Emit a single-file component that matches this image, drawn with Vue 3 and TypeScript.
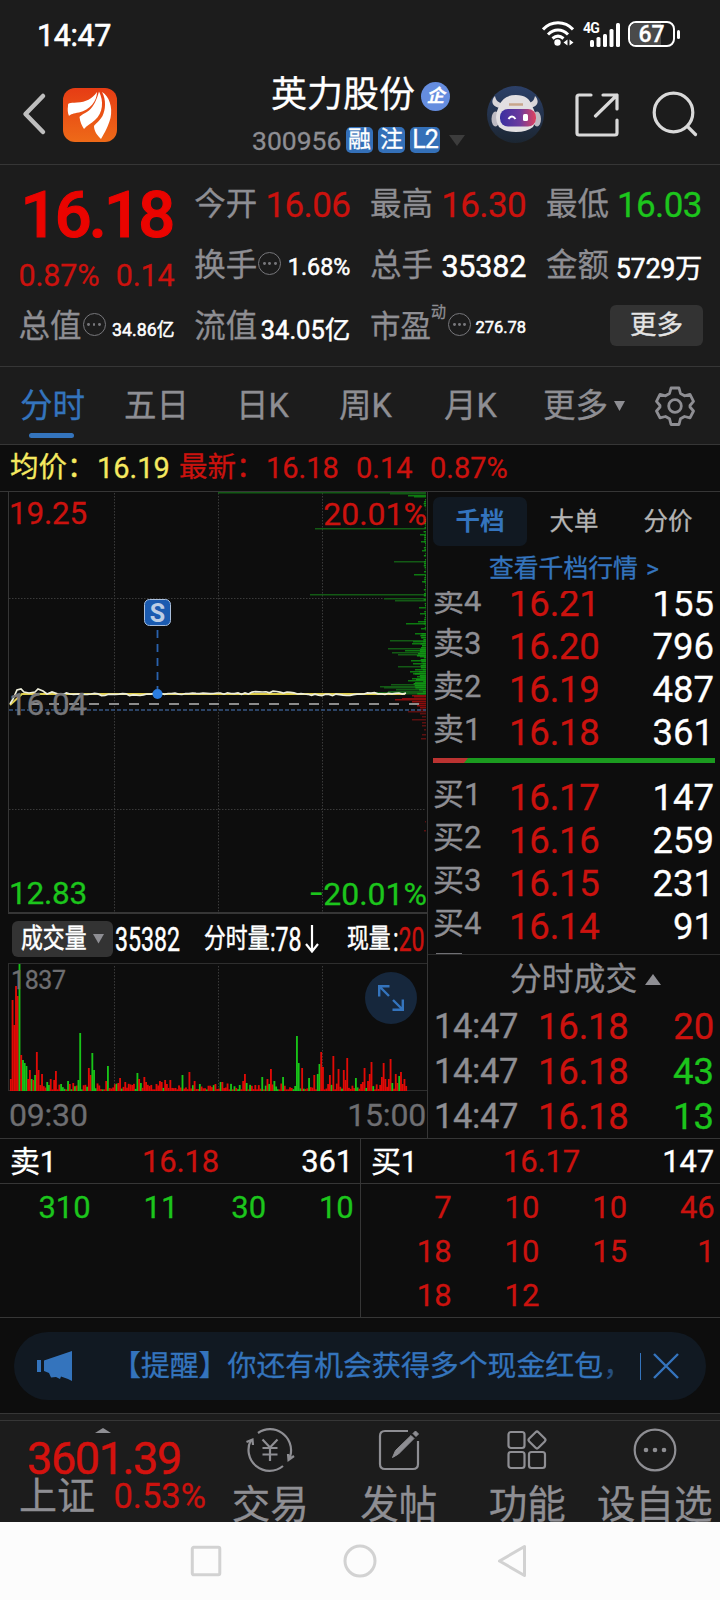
<script setup lang="ts">
type Tone = 'red' | 'green' | 'white'

interface BookRow { label: string; price: string; qty: string }
interface Bar { x: number; y: number; h: number; c: string }

const asks: BookRow[] = [
  { label: '卖4', price: '16.21', qty: '155' },
  { label: '卖3', price: '16.20', qty: '796' },
  { label: '卖2', price: '16.19', qty: '487' },
  { label: '卖1', price: '16.18', qty: '361' },
]
const bids: BookRow[] = [
  { label: '买1', price: '16.17', qty: '147' },
  { label: '买2', price: '16.16', qty: '259' },
  { label: '买3', price: '16.15', qty: '231' },
  { label: '买4', price: '16.14', qty: '91' },
]
const trades: { time: string; price: string; qty: string; tone: Tone }[] = [
  { time: '14:47', price: '16.18', qty: '20', tone: 'red' },
  { time: '14:47', price: '16.18', qty: '43', tone: 'green' },
  { time: '14:47', price: '16.18', qty: '13', tone: 'green' },
]
const queueAsk = ['310', '11', '30', '10']
const queueBid = ['7', '10', '10', '46', '18', '10', '15', '1', '18', '12']

// Deterministic noise so that the minor bars stay the same on every render
let seed = 11
function rnd(): number {
  seed = (seed * 16807) % 2147483647
  return seed / 2147483647
}

const RED = '#e00a06'
const GREEN = '#18c418'
const peaks: [number, number, number][] = [
  [0, 12, 0], [1, 91, 0], [2, 66, 0], [3, 105, 0], [4, 95, 0], [5, 127, 1], [6, 36, 0], [7, 31, 1], [8, 28, 1], [9, 25, 1],
  [10, 12, 0], [11, 21, 0], [12, 12, 1], [13, 11, 0], [14, 16, 1], [15, 39, 0], [16, 21, 0], [17, 6, 0], [18, 17, 0], [21, 9, 1], [22, 6, 1],
  [23, 12, 0], [25, 11, 0], [26, 20, 0], [29, 7, 1], [33, 10, 1], [36, 8, 0], [39, 11, 1], [40, 58, 1], [45, 23, 0],
  [46, 16, 0], [47, 38, 1], [48, 21, 1], [55, 10, 0], [56, 25, 1], [62, 8, 0], [63, 13, 0], [66, 9, 0], [70, 6, 0],
  [73, 18, 1], [74, 12, 0], [75, 8, 1], [77, 14, 0], [78, 9, 0], [84, 7, 0], [86, 10, 0], [87, 9, 0], [89, 11, 0], [90, 7, 0], [92, 11, 0],
  [99, 16, 1], [103, 19, 0], [106, 10, 0], [109, 7, 1], [118, 7, 0], [121, 9, 1], [122, 9, 0], [132, 6, 1], [134, 10, 0],
  [135, 17, 0], [136, 8, 1], [141, 6, 0], [145, 14, 1], [148, 12, 0], [150, 22, 0], [152, 10, 1], [157, 14, 1],
  [164, 5, 1], [165, 55, 1], [166, 28, 1], [168, 23, 0], [172, 13, 1], [175, 16, 0], [177, 17, 1], [178, 27, 1],
  [179, 39, 0], [180, 24, 0], [184, 16, 0], [186, 35, 0], [189, 22, 0], [192, 21, 0], [193, 11, 0], [194, 33, 0],
  [199, 13, 1], [203, 9, 0], [204, 23, 0], [206, 10, 0], [207, 17, 0], [208, 29, 0], [214, 14, 0], [215, 28, 0],
  [216, 12, 0], [218, 12, 0], [219, 32, 0], [220, 8, 1], [222, 17, 0], [223, 8, 0], [224, 15, 1], [225, 19, 0], [226, 7, 0], [227, 12, 0], [228, 5, 0],
]
const volumeBars: Bar[] = []
for (let i = 0; i < 229; i++) {
  const peak = peaks.find((p) => p[0] === i)
  const noise = rnd()
  const h = peak ? peak[1] : 1.6 + noise * noise * 6
  const green = peak ? peak[2] === 1 : rnd() > 0.75
  volumeBars.push({ x: 0.9 + i * 1.734, y: 127 - h, h, c: green ? GREEN : RED })
}

// Resting orders by price level: distance from the top edge and bar length
const depthPeaks: [number, number][] = [
  [1, 208], [2, 36], [4, 18], [5, 12], [37, 111], [43, 6], [50, 5], [59, 4], [70, 32], [83, 12], [90, 4],
  [103, 116], [107, 42], [109, 31], [116, 7], [122, 6], [130, 8], [132, 20], [137, 5], [142, 11], [149, 36],
  [150, 13], [152, 14], [157, 38], [159, 21], [161, 34], [163, 28], [165, 6], [169, 15], [172, 13], [175, 28],
  [178, 11], [180, 16], [182, 13], [185, 9], [187, 14], [189, 18], [191, 11], [193, 35], [195, 46], [196, 42],
  [198, 30], [200, 38], [201, 52], [202, 48],
]
const depthBars: Bar[] = []
for (const [y, w] of depthPeaks) {
  depthBars.push({ x: 417 - w, y, h: w, c: w > 25 ? '#135a15' : '#0d7a10' })
}
for (let y = 8; y < 203; y += 2) {
  const w = y > 140 ? 2 + rnd() * ((y - 120) / 6) : rnd() * 2.4
  depthBars.push({ x: 417 - w, y, h: w, c: '#109313' })
}
const bidBars: [number, number][] = [
  [204, 14], [205, 12], [207, 24], [208, 31], [210, 14], [212, 12], [214, 9], [216, 6], [218, 8], [220, 18], [222, 6],
  [225, 4], [228, 14], [231, 4], [234, 4], [238, 2], [243, 4], [247, 5], [330, 1], [339, 2],
]

const lead = '1,213 4,208 8,199 12,198 15,201 20,202 26,201 29,198 34,200 38,203 43,201 49,203'
const trail: string[] = []
for (let x = 54; x < 398; x += 3.5) {
  const swell = x > 90 && x < 145 ? 1.4 : x > 240 && x < 288 ? -1.2 : x > 300 && x < 345 ? 1.6 : 0.3
  trail.push(`${x.toFixed(1)},${(202.3 + swell + (rnd() - 0.5) * 2).toFixed(1)}`)
}
const priceLine = `${lead} ${trail.join(' ')}`
</script>

<template>
  <div class="phone">
    <div class="status">
      <span class="clock">14:47</span>
      <svg class="wifi" width="32" height="26" viewBox="0 0 32 26" fill="none" stroke="#fff" stroke-width="3">
        <path d="M1 8.500C9-.5 23-.5 31 8.500M6 13.500C12 7.500 20 7.500 26 13.500M10.500 17.500C14 14.500 18 14.500 21.500 17.500" />
        <circle cx="15.500" cy="21.500" r="3.200" fill="#fff" stroke="none" />
        <path d="M21.500 21.500l4-3v6zM31.500 21.500l-4-3v6z" fill="#fff" stroke="none" />
      </svg>
      <div class="cell">
        <span>4G</span>
        <svg width="30" height="24" viewBox="0 0 30 24" fill="#fff">
          <rect x="0" y="17" width="4" height="7" rx="1.500" /><rect x="6.500" y="14" width="4" height="10" rx="1.500" />
          <rect x="13" y="11" width="4" height="13" rx="1.500" /><rect x="19.500" y="6" width="4" height="18" rx="1.500" />
          <rect x="26" y="0" width="4" height="24" rx="1.500" />
        </svg>
      </div>
      <div class="battery"><i class="charge"></i><span>67</span></div>
      <i class="battery-tip"></i>
    </div>

    <header class="head">
      <svg class="back" width="26" height="44" viewBox="0 0 26 44" fill="none" stroke="#bebebe" stroke-width="4.500" stroke-linecap="round" stroke-linejoin="round">
        <path d="M21 4L3.500 22 21 40" />
      </svg>
      <svg class="logo" width="54" height="54" viewBox="0 0 54 54">
        <defs><linearGradient id="lg" x1="0" y1="0" x2="0" y2="1"><stop offset="0" stop-color="#e63c14" /><stop offset="1" stop-color="#ee6a18" /></linearGradient></defs>
        <rect width="54" height="54" rx="12" fill="url(#lg)" />
        <g fill="#fff">
          <path d="M5 18C5 14.500 6 15 14 14.500 23 14 29 11 34 4 34 13 27 22 16 24.500 10 25.500 8 26 6 28 4.500 25 4.500 21 5 18z" />
          <path d="M36 3.500C34 11 31 18 26 22.500 21 26 18 27 16.500 29 17 34 19 38 21 41 24 37 28 36 32 32 40 25 41 13 36 3.500z" />
          <path d="M39 4C43.500 12 42.500 22 39.500 28 36 34 32 36 31 38 31 43 34 47 38 51 42 44 45 39 47.500 30 50 19 46 8 39 4z" />
        </g>
      </svg>
      <div class="title">
        <div class="name">英力股份<span class="qi">企</span></div>
        <div class="code">
          <span>300956</span><b>融</b><b>注</b><b class="l2">L2</b>
          <svg width="16" height="11"><path d="M0 0h16l-8 11z" fill="#3c3c3c" /></svg>
        </div>
      </div>
      <svg class="robot" width="57" height="57" viewBox="0 0 57 57">
        <defs>
          <linearGradient id="sky" x1="0" y1="0" x2="0" y2="1"><stop offset="0" stop-color="#2c4068" /><stop offset="1" stop-color="#1c2632" /></linearGradient>
          <linearGradient id="visor"><stop offset="0" stop-color="#3a30a0" /><stop offset=".55" stop-color="#6b3a9e" /><stop offset="1" stop-color="#e0425e" /></linearGradient>
        </defs>
        <circle cx="28.500" cy="28.500" r="28.500" fill="url(#sky)" />
        <path d="M8 10C3 15 5 22 15 22L19 17C12 18 9 15 8 10zM48 10C53 15 51 22 41 22L37 17C44 18 47 15 48 10z" fill="#d8d5d8" />
        <ellipse cx="8.500" cy="33" rx="4" ry="7.500" fill="#bdbac2" /><ellipse cx="50" cy="33" rx="4" ry="7.500" fill="#bdbac2" />
        <path d="M12 20Q16 9 29 9T45 20Q52 32 46 41 40 46 29 46T12 41Q6 32 12 20z" fill="#e2dfe2" />
        <rect x="13" y="23" width="36" height="17.500" rx="8" fill="url(#visor)" />
        <path d="M22 18.500H36" stroke="#c8a68c" stroke-width="2.500" fill="none" />
        <path d="M21.500 33Q25 28 28.500 33" stroke="#fff" stroke-width="2" fill="none" />
        <rect x="36" y="28" width="5" height="7" rx="1.500" fill="#fff" />
      </svg>
      <svg class="share" width="44" height="44" viewBox="0 0 44 44" fill="none" stroke="#d9d9d9" stroke-width="3.200" stroke-linecap="round" stroke-linejoin="round">
        <path d="M16 2H4Q2 2 2 4V40Q2 42 4 42H40Q42 42 42 40V27M28 2H42V16M42 2L20.500 23" />
      </svg>
      <svg class="search" width="46" height="46" viewBox="0 0 46 46" fill="none" stroke="#d9d9d9" stroke-width="3.200" stroke-linecap="round">
        <circle cx="21.500" cy="21.500" r="19.300" /><path d="M35.500 35.500l8 8" />
      </svg>
    </header>

    <section class="quote">
      <div class="last">
        <div class="big">16.18</div>
        <div class="chg"><span>0.87%</span><span>0.14</span></div>
      </div>
      <div class="kv"><label>今开</label><span class="v1 red">16.06</span></div>
      <div class="kv"><label>最高</label><span class="v1 red">16.30</span></div>
      <div class="kv"><label>最低</label><span class="v1 green">16.03</span></div>
      <div class="kv"><label>换手</label><i class="dots"><u></u><u></u><u></u></i><span class="v24">1.68%</span></div>
      <div class="kv"><label>总手</label><span class="v30">35382</span></div>
      <div class="kv"><label>金额</label><span class="v27">5729万</span></div>
      <div class="kv"><label>总值</label><i class="dots"><u></u><u></u><u></u></i><span class="v18">34.86亿</span></div>
      <div class="kv"><label>流值</label><span class="v25">34.05亿</span></div>
      <div class="kv"><label class="pe">市盈<sup>动</sup></label><i class="dots"><u></u><u></u><u></u></i><span class="v16">276.78</span></div>
      <div class="kv end"><button class="more">更多</button></div>
    </section>

    <nav class="tabs">
      <span class="on">分时</span><span>五日</span><span>日K</span><span>周K</span><span>月K</span>
      <span class="drop">更多<svg width="11" height="10"><path d="M0 0h11l-5.500 10z" fill="#8e8e93" /></svg></span>
      <svg class="gear" width="40" height="40" viewBox="0 0 40 40" fill="none" stroke="#8e8e93" stroke-width="2.800" stroke-linejoin="round">
        <path d="M16 2h8l1.500 5.500 4 2.300 5.500-1.500 3.500 7-3.500 4.200v1.500l3.500 4-3.500 6.800-5.500-1.300-4 2.200L24 38.500h-8l-1.500-5.800-4-2.200L5 31.800 1.500 25l3.500-4v-1.500L1.500 15.300 5 8.300l5.500 1.500 4-2.300z" />
        <circle cx="20" cy="20" r="6.300" />
      </svg>
    </nav>

    <div class="avg">
      <span class="yl k">均价：</span><span class="yl w1">16.19</span>
      <span class="red k">最新：</span><span class="red w2">16.18</span><span class="red w3">0.14</span><span class="red">0.87%</span>
    </div>

    <section class="main">
      <div class="left">
        <div class="plot">
          <svg width="418" height="424" viewBox="0 0 418 424">
            <g stroke="#3a3a3a" stroke-dasharray="1.500 1.500">
              <path d="M105.500 2V423M209.500 2V423M313.500 2V423M0 107.500H417M0 318.500H417" />
            </g>
            <rect v-for="(b, i) in depthBars" :key="'d' + i" :x="b.x" :y="b.y" :width="b.h" height="1.500" :fill="b.c" />
            <rect v-for="(b, i) in bidBars" :key="'b' + i" :x="417 - b[1]" :y="b[0]" :width="b[1]" height="1.500" :fill="b[0] < 218 ? '#8a0c0c' : '#5c1010'" />
            <path d="M0 219H417" stroke="#365582" stroke-width="1.400" stroke-dasharray="4 2" />
            <path d="M20 213H417" stroke="#8c8c8c" stroke-width="2" stroke-dasharray="10 10" />
            <path d="M1 214L13 203H396" fill="none" stroke="#dfce4c" stroke-width="2" />
            <polyline :points="priceLine" fill="none" stroke="#efefdc" stroke-width="1.700" />
            <path d="M148.500 139V198" stroke="#2a62ad" stroke-width="1.800" stroke-dasharray="8 6" />
            <circle cx="148.500" cy="203" r="5" fill="#2b7de0" />
            <rect x="135.500" y="108.500" width="26" height="26" rx="5" fill="#1b5bb0" stroke="#a9bedb" />
            <text x="148.500" y="130.500" text-anchor="middle" class="mark">S</text>
          </svg>
          <span class="lb tl red">19.25</span><span class="lb tr red">20.01%</span>
          <span class="lb md">16.04</span>
          <span class="lb bl green">12.83</span><span class="lb br green"><i>−</i>20.01%</span>
        </div>
        <div class="volhead">
          <div class="pick"><span class="sq cj">成交量</span><svg width="11" height="10"><path d="M0 0h11l-5.500 9.500z" fill="#8e8e93" /></svg></div>
          <div class="slot s1"><span class="sq dg">35382</span></div>
          <div class="slot s2"><span class="sq cj">分时量</span></div>
          <div class="slot s3"><span class="sq dg">:78</span></div>
          <svg class="arrow" width="14" height="28" viewBox="0 0 14 28" fill="none" stroke="#fff" stroke-width="2.200"><path d="M7 0V26M1 19l6 7.500 6-7.500" /></svg>
          <div class="slot s4"><span class="sq cj">现量</span></div>
          <div class="slot s5"><span class="sq dg">:<em class="red">20</em></span></div>
        </div>
        <div class="vol">
          <svg width="418" height="128" viewBox="0 0 418 128">
            <path d="M105.500 2V127M209.500 2V127M313.500 2V127" stroke="#3a3a3a" stroke-dasharray="1.500 1.500" />
            <rect v-for="(b, i) in volumeBars" :key="'v' + i" :x="b.x" :y="b.y" width="1.850" :height="b.h" :fill="b.c" />
          </svg>
          <span class="peak">1837</span>
          <div class="expand">
            <svg width="26" height="26" viewBox="0 0 26 26" fill="none" stroke="#3474bd" stroke-width="2.400"><path d="M11.500 1.200H1.200V11.500M1.500 1.500L11 11M14.500 24.800H24.800V14.500M24.500 24.500L15 15" /></svg>
          </div>
        </div>
        <div class="times"><span>09:30</span><span>15:00</span></div>
      </div>

      <div class="right">
        <div class="rtabs"><span class="on">千档</span><span>大单</span><span>分价</span></div>
        <div class="link">查看千档行情 <span>&gt;</span></div>
        <div class="book">
          <div class="asks">
            <div v-for="r in asks" :key="r.label" class="row"><label>{{ r.label }}</label><span class="red">{{ r.price }}</span><b>{{ r.qty }}</b></div>
          </div>
          <div class="ratio"><i></i></div>
          <div v-for="r in bids" :key="r.label" class="row"><label>{{ r.label }}</label><span class="red">{{ r.price }}</span><b>{{ r.qty }}</b></div>
          <i class="next"></i>
        </div>
        <div class="thead">分时成交<svg width="16" height="11"><path d="M0 11h16l-8-11z" fill="#8e8e93" /></svg></div>
        <div v-for="(t, i) in trades" :key="i" class="trow"><span class="gr">{{ t.time }}</span><span class="red">{{ t.price }}</span><b :class="t.tone">{{ t.qty }}</b></div>
      </div>
    </section>

    <section class="queue">
      <div class="qcol">
        <div class="qhead"><span>卖1</span><span class="red">16.18</span><span>361</span></div>
        <div class="qgrid green"><span v-for="(q, i) in queueAsk" :key="i">{{ q }}</span></div>
      </div>
      <div class="qcol b">
        <div class="qhead"><span>买1</span><span class="red">16.17</span><span>147</span></div>
        <div class="qgrid red"><span v-for="(q, i) in queueBid" :key="i">{{ q }}</span></div>
      </div>
    </section>

    <section class="notice">
      <div class="pill">
        <svg width="35" height="30" viewBox="0 0 35 30" fill="#3474bd"><path d="M0 9h4v12H0zM7 9.500L35 0V30L31 28 24 25.500 23 28 19 26 14 26.500 12 22 7 20z" /></svg>
        <p>【提醒】你还有机会获得多个现金红包<span>，</span></p>
        <i></i>
        <svg class="x" width="26" height="26" viewBox="0 0 26 26" stroke="#3474bd" stroke-width="2.400"><path d="M1 1l24 24M25 1L1 25" /></svg>
      </div>
    </section>

    <footer class="foot">
      <div class="index">
        <svg width="16" height="5"><path d="M0 5L8 0l8 5z" fill="#8e8e93" /></svg>
        <div class="pt">3601.39</div>
        <div class="ln"><span>上证</span><span class="red">0.53%</span></div>
      </div>
      <div class="act">
        <svg width="50" height="44" viewBox="0 0 50 44" fill="none" stroke="#8e8e93" stroke-width="2.200">
          <path d="M13 5A21 21 0 0 1 45.500 27Q45 30 43.500 32M38 38A21 21 0 0 1 6 12M1.500 14L7.500 11.500 8 17M49 28L43.500 32 43 26" />
          <path d="M17.500 11.500L25 19.500 32.500 11.500M25 19.500V33M17.500 20H32.500M17.500 26.500H32.500" />
        </svg><span>交易</span>
      </div>
      <div class="act">
        <svg width="44" height="44" viewBox="0 0 44 44" fill="none" stroke="#8e8e93" stroke-width="2.200">
          <path d="M31 3H8Q3 3 3 8V36Q3 41 8 41H36Q41 41 41 36V13" />
          <path d="M15.500 29.500L18.500 22.500 34 7.500 37 10.500 21.500 26zM36 5.500L38.500 3 41.500 6 39 8.500z" fill="#8e8e93" stroke="#8e8e93" stroke-width="1" />
        </svg><span>发帖</span>
      </div>
      <div class="act">
        <svg width="44" height="44" viewBox="0 0 44 44" fill="none" stroke="#8e8e93" stroke-width="2.200">
          <rect x="3.500" y="4" width="16" height="16" rx="2.500" /><rect x="3.500" y="24" width="16" height="16" rx="2.500" /><rect x="24" y="24" width="16" height="16" rx="2.500" />
          <rect x="25.500" y="5.500" width="13" height="13" rx="2" transform="rotate(45 32 12)" />
        </svg><span>功能</span>
      </div>
      <div class="act">
        <svg width="44" height="44" viewBox="0 0 44 44" fill="none" stroke="#8e8e93" stroke-width="2.200">
          <circle cx="22" cy="22" r="20.300" /><g fill="#8e8e93" stroke="none"><circle cx="13" cy="22" r="2.300" /><circle cx="22" cy="22" r="2.300" /><circle cx="31" cy="22" r="2.300" /></g>
        </svg><span>设自选</span>
      </div>
    </footer>

    <div class="sys">
      <svg width="34" height="34" viewBox="0 0 34 34"><rect x="3.300" y="3.300" width="27.500" height="27.500" rx="1.500" /></svg>
      <svg width="36" height="36" viewBox="0 0 36 36"><circle cx="18" cy="18" r="15" /></svg>
      <svg width="34" height="36" viewBox="0 0 34 36"><path d="M2.500 18L27.500 3.500V32.500z" stroke-linejoin="round" /></svg>
    </div>
  </div>
</template>

<style>
body { margin: 0; background: #0d0d0d; }
</style>

<style scoped>
.phone { width: 720px; height: 1600px; overflow: hidden; background: #0d0d0d; color: #fff; font-family: Roboto, "Noto Sans CJK SC", sans-serif; -webkit-text-stroke: .3px; display: flex; flex-direction: column; }
.phone * { box-sizing: border-box; }
.phone > * { flex: none; }
svg { display: block; flex: none; }
.red { color: #cb120e; }
.green { color: #1cc51c; }
.white { color: #fff; }
.yl { color: #f5e960; }
.gr { color: #8e8e93; }
i, em { font-style: normal; }

.status { height: 70px; background: #1c1c1c; display: flex; align-items: center; padding-left: 37px; }
.clock { width: 505px; font-size: 30.500px; letter-spacing: -.4px; line-height: 70px; padding-top: 1px; -webkit-text-stroke: .6px; }
.wifi { margin: -2px 9px 0 0; }
.cell { width: 38px; display: flex; justify-content: flex-end; position: relative; margin: -1px 8px 0 -1px; }
.cell span { position: absolute; left: 1px; top: -2px; font-size: 14px; line-height: 14px; font-weight: 700; letter-spacing: -.8px; -webkit-text-stroke: 0; }
.cell svg { margin-left: auto; }
.battery { position: relative; width: 47px; height: 26px; border: 2px solid #fff; border-radius: 8px; overflow: hidden; text-align: center; margin: -2px 0 0 0; }
.battery span { position: relative; display: block; font-size: 23px; line-height: 23px; font-weight: 500; }
.charge { position: absolute; left: 0; top: 0; width: 31px; height: 22px; background: #4a4a4a; }
.battery-tip { width: 3px; height: 9px; border-radius: 2px; background: #fff; margin: -2px 0 0 2px; }

.head { height: 95px; background: #1c1c1c; border-bottom: 1px solid #363636; display: flex; align-items: flex-start; padding-left: 22px; }
.back { margin: 22px 15px 0 0; }
.logo { margin-top: 17.500px; }
.title { width: 370px; padding-left: 135px; }
.name { display: flex; align-items: center; height: 50px; padding-left: 19px; font-size: 36px; line-height: 50px; }
.qi { width: 29px; height: 29px; margin: 3px 0 0 6px; border-radius: 50%; background: #658ddf; font-size: 18px; line-height: 28px; text-align: center; font-weight: 700; font-style: italic; }
.code { display: flex; align-items: center; height: 40px; font-size: 26.500px; color: #8e8e93; }
.code span { width: 94px; }
.code b { width: 27px; height: 26px; margin-right: 5px; border-radius: 5px; background: #3470b8; color: #fff; font-weight: 400; font-size: 23px; line-height: 26px; text-align: center; }
.code b.l2 { width: 30px; margin-right: 9px; font-size: 25px; letter-spacing: -1px; }
.robot { margin-top: 16px; }
.share { margin: 22.500px 0 0 31px; }
.search { margin: 21px 0 0 33px; }

.quote { height: 202px; background: #1c1c1c; border-bottom: 1px solid #363636; padding: 9.500px 0 0 18.500px; display: grid; grid-template-columns: repeat(4, 156px); grid-template-rows: repeat(3, 61px); column-gap: 19.800px; }
.last { grid-row: span 2; }
.big { height: 81px; line-height: 81px; font-size: 65px; font-weight: 500; letter-spacing: -2.800px; color: #ea0400; white-space: nowrap; padding-left: 2px; -webkit-text-stroke: 1.200px; }
.chg { display: flex; justify-content: space-between; font-size: 30.500px; line-height: 40px; color: #cb120e; letter-spacing: -.2px; }
.kv { display: flex; align-items: center; height: 61px; white-space: nowrap; }
.kv label { font-size: 31.500px; color: #8e8e93; line-height: 62px; }
.kv > span { margin-left: auto; -webkit-text-stroke: .5px; }
.kv > .v1 { font-size: 35px; letter-spacing: -.6px; -webkit-text-stroke: .3px; padding-top: 1px; }
.v24 { font-size: 23.300px; padding-top: 2px; }
.v30 { font-size: 30.500px; letter-spacing: -.2px; }
.v27 { font-size: 27px; letter-spacing: -.3px; }
.v18 { font-size: 17.800px; padding-top: 2px; }
.v25 { font-size: 25.500px; }
.v16 { font-size: 16.500px; padding-top: 1px; }
.dots { width: 23px; height: 23px; border: 1.600px solid #77777b; border-radius: 50%; display: flex; align-items: center; justify-content: center; gap: 2.500px; margin: -5px 0 0 1px; }
.dots u { width: 2.800px; height: 2.800px; border-radius: 50%; background: #77777b; }
.pe { position: relative; margin-right: 16px; }
.kv .pe { font-size: 30.500px; }
.pe sup { position: absolute; left: 61px; top: 8px; font-size: 15px; line-height: 16px; }
.end { justify-content: flex-end; }
.more { width: 93px; height: 41px; margin: -3px -1px 0 0; border: 0; border-radius: 6px; background: #333; color: #e4e4e4; font: 26.500px/39px Roboto, "Noto Sans CJK SC", sans-serif; -webkit-text-stroke: .3px; padding: 0 0 2px; }

.tabs { height: 78px; background: #1c1c1c; border-bottom: 1px solid #363636; display: flex; align-items: center; padding-left: 20px; color: #8e8e93; font-size: 32.500px; line-height: 80px; }
.tabs > span { position: relative; width: 107px; }
.tabs > span:nth-child(1) { width: 104px; }
.tabs > span:nth-child(2) { width: 112px; }
.tabs > span:nth-child(3) { width: 103px; }
.tabs > span:nth-child(4) { width: 105px; }
.tabs > span:nth-child(5) { width: 99px; }
.tabs .on { color: #3474bd; }
.tabs .on::after { content: ""; position: absolute; left: 9px; bottom: 8px; width: 45px; height: 5px; border-radius: 3px; background: #3474bd; }
.tabs .drop { width: 112px; display: flex; align-items: center; gap: 6px; }

.avg { height: 47px; border-bottom: 1px solid #363636; display: flex; padding-left: 10px; font-size: 29px; line-height: 46px; white-space: nowrap; }
.avg .k { width: 87px; font-size: 28.500px; }
.avg .w1 { width: 82px; }
.avg .w2 { width: 90px; }
.avg .w3 { width: 74px; }

.main { height: 646px; display: flex; }
.left { width: 428px; border-right: 1px solid #363636; padding-left: 9px; }
.plot { position: relative; height: 423px; border-left: 1px solid #363636; border-bottom: 2px solid #363636; margin-left: -1px; }
.plot svg { margin-top: -1px; }
.mark { font: 700 25px Roboto, sans-serif; fill: #bccde4; }
.lb { position: absolute; font-size: 31.500px; line-height: 34px; letter-spacing: -.2px; }
.tl { left: 0; top: 6px; }
.tr { right: 0; top: 6px; font-size: 32px; letter-spacing: 0; }
.md { left: 0; top: 197px; color: #77777a; }
.bl { left: 0; top: 386px; }
.br { right: 0; top: 386px; font-size: 32px; letter-spacing: 0; }
.br i { display: inline-block; transform: scaleX(.8); transform-origin: right center; }
.volhead { height: 49px; display: flex; align-items: center; padding: 1px 0 0 3px; }
.pick { width: 101px; height: 36px; border-radius: 6px; background: #333; display: flex; align-items: center; padding-left: 9px; }
.pick svg { margin-left: -9px; }
.sq { display: block; white-space: nowrap; transform-origin: left center; -webkit-text-stroke: .5px; }
.cj { font-size: 27px; line-height: 36px; transform: scaleX(.81); }
.dg { font-size: 33.500px; line-height: 38px; transform: scaleX(.69); }
.slot { height: 36px; overflow: visible; }
.s1 { width: 88px; padding-left: 2px; }
.s2 { width: 66px; padding-left: 3px; }
.s3 { width: 38px; padding-left: 3px; }
.arrow { margin-right: 28px; }
.s4 { width: 45px; }
.s5 { width: 33px; padding-left: 1px; }
.vol { position: relative; height: 128px; border: 1px solid #2e2e2e; border-right: 0; margin-left: -1px; }
.peak { position: absolute; left: 2px; top: 3px; font-size: 25px; line-height: 28px; letter-spacing: -.4px; color: #6e6e71; }
.expand { position: absolute; right: 10px; top: 8px; width: 52px; height: 52px; border-radius: 50%; background: #16273c; display: flex; align-items: center; justify-content: center; }
.times { height: 46px; display: flex; justify-content: space-between; padding-right: 1px; font-size: 32px; line-height: 48px; color: #6e6e71; letter-spacing: -.2px; }

.right { width: 292px; overflow: hidden; }
.rtabs { display: flex; margin: 5px 0 0 5px; height: 49px; font-size: 24.500px; line-height: 50px; color: #b4b4b4; text-align: center; }
.rtabs span { width: 94px; border-radius: 7px; }
.rtabs .on { background: #111922; color: #3474bd; font-weight: 700; -webkit-text-stroke: 0; }
.link { height: 45px; padding-left: 61px; font-size: 24.800px; line-height: 46px; color: #3474bd; white-space: nowrap; }
.link span { margin-left: 2px; }
.book { height: 364px; overflow: hidden; border-bottom: 1px solid #2c2c2c; }
.asks { margin-top: -9px; }
.row { display: flex; height: 43px; padding: 0 6px 0 5px; font-size: 36.500px; line-height: 43px; }
.row label { width: 76px; font-size: 31px; line-height: 37px; color: #8e8e93; white-space: nowrap; }
.row b { margin-left: auto; font-weight: 400; }
.row .red, .trow .red { letter-spacing: -.2px; }
.ratio { height: 5px; margin: 4px 5px 13px 5px; background: #1b9a1f; }
.ratio i { display: block; width: 35px; height: 5px; background: #bb3331; clip-path: polygon(0 0, 100% 0, 31px 100%, 0 100%); }
.next { display: block; width: 26px; height: 2px; margin: 5px 0 0 8px; background: #6f6f73; }
.thead { height: 48px; display: flex; align-items: center; padding-left: 82px; gap: 8px; font-size: 31.800px; line-height: 49px; color: #8e8e93; }
.trow { display: flex; height: 45px; padding: 0 6px 0 6px; font-size: 36.500px; line-height: 47px; }
.trow .gr { width: 104px; font-size: 34.500px; letter-spacing: -.4px; }
.trow b { margin-left: auto; font-weight: 400; }

.queue { height: 180px; display: flex; border-top: 1px solid #363636; border-bottom: 1px solid #363636; font-size: 31px; }
.qcol { width: 360px; }
.qcol.b { border-left: 1px solid #363636; }
.qhead { height: 45px; border-bottom: 1px solid #363636; display: grid; grid-template-columns: 132px 1fr auto; padding: 0 7px 0 10px; line-height: 46px; letter-spacing: -.2px; }
.b .qhead { padding: 0 6px 0 10px; }
.qhead span:first-child { font-size: 30px; }
.qgrid { display: grid; grid-template-columns: repeat(4, 87.700px); margin-left: 3px; text-align: right; line-height: 44px; grid-auto-rows: 44px; padding-top: 2px; }

.notice { height: 95px; padding: 14px 14px 0; }
.pill { height: 68px; border-radius: 34px; background: #111922; display: flex; align-items: center; padding-left: 23px; }
.pill p { margin: 0; width: 566px; padding-left: 40px; font-size: 28.900px; line-height: 68px; color: #3474bd; white-space: nowrap; }
.pill p span { opacity: .6; }
.pill i { width: 1px; height: 27px; background: #3474bd; margin-left: 2px; }
.x { margin-left: 12px; }

.foot { height: 109px; overflow: hidden; background: #1c1c1c; border-top: 1px solid #363636; display: flex; position: relative; padding-left: 19px; color: #8e8e93; }
.foot::before { content: ""; position: absolute; left: 0; top: 6px; width: 720px; height: 1px; background: #363636; }
.index { width: 187px; padding-top: 14px; }
.index svg { margin-left: 76px; }
.pt { height: 42px; padding-left: 8px; font-size: 45px; line-height: 48px; letter-spacing: -1.400px; color: #d3120e; margin-top: 2px; -webkit-text-stroke: .5px; }
.ln { display: flex; justify-content: space-between; font-size: 38px; line-height: 38px; align-items: center; height: 38px; }
.ln .red { font-size: 34.500px; }
.act { width: 128.500px; display: flex; flex-direction: column; align-items: center; padding-top: 14px; }
.act:last-child { margin-left: -1px; }
.act span { font-size: 38.500px; line-height: 58px; margin-top: 4px; white-space: nowrap; }

.sys { height: 78px; background: #fcfcfc; display: flex; align-items: center; justify-content: center; gap: 119px; }
.sys svg { fill: none; stroke: #d2d2d2; stroke-width: 3; }
</style>
